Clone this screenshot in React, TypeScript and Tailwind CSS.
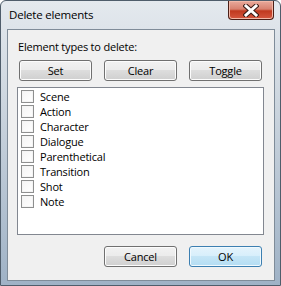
import React from "react";

const items = [
  "Scene",
  "Action",
  "Character",
  "Dialogue",
  "Parenthetical",
  "Transition",
  "Shot",
  "Note",
];

const Btn = ({ label, primary }: { label: string; primary?: boolean }) => (
  <button
    className={
      primary
        ? "h-[21px] w-[73px] rounded-[3px] border border-[#3c7fb1] bg-[linear-gradient(#e5f4fc_0%,#d6eefb_50%,#c4e5f6_50%,#b4ddf3_100%)] shadow-[inset_0_0_0_1px_#f0f9fe] text-[11px] tracking-[-0.2px] leading-[19px] text-black"
        : "h-[21px] w-[73px] rounded-[3px] border border-[#707070] bg-[linear-gradient(#f2f2f2_0%,#ebebeb_50%,#dddddd_50%,#cfcfcf_100%)] shadow-[inset_0_0_0_1px_#fcfcfc] text-[11px] tracking-[-0.2px] leading-[19px] text-black"
    }
  >
    {label}
  </button>
);

const App = () => {
  return (
    <div className="w-[281px] h-[286px] flex flex-col rounded-t-[6px] border border-[#4f5d6b] bg-[linear-gradient(180deg,#e4e9ee_0%,#cdd6df_35%,#9fb2c6_100%)] font-['Open_Sans',sans-serif]">
      {/* title bar */}
      <div className="h-[28px] flex items-start justify-between pl-[8px] pr-[6px]">
        <span className="pt-[6px] text-[11.5px] tracking-[-0.2px] leading-[15px] text-black">
          Delete elements
        </span>
        <div className="w-[46px] h-[19px] rounded-b-[4px] border border-t-0 border-[#4a1e16] bg-[linear-gradient(#e9aa9c_0%,#d8816f_45%,#c0391f_55%,#d5573f_100%)] shadow-[inset_0_0_0_1px_#f2b8a8] flex items-center justify-center">
          <svg width="16" height="13" viewBox="0 0 16 13">
            <path d="M3 2 L13 11 M13 2 L3 11" stroke="#3a1b16" strokeWidth="5" strokeLinecap="square" />
            <path d="M3 2 L13 11 M13 2 L3 11" stroke="#ffffff" strokeWidth="3" strokeLinecap="square" />
          </svg>
        </div>
      </div>

      {/* client area */}
      <div className="flex-1 ml-[6px] mr-[5px] mb-[4px] border border-[#7f8c99] bg-[#f0f0f0] flex flex-col text-[11px] tracking-[-0.2px] text-black">
        <div className="pl-[10px] pt-[9px] leading-[15px]">Element types to delete:</div>

        <div className="mt-[6px] pl-[11px] flex gap-[12px]">
          <Btn label="Set" />
          <Btn label="Clear" />
          <Btn label="Toggle" />
        </div>

        <div className="mt-[6px] ml-[9px] w-[247px] h-[148px] border border-[#828790] bg-white pl-[3px] pt-[1px] flex flex-col">
          {items.map((name) => (
            <div key={name} className="h-[15px] flex items-center gap-[6px]">
              <span className="w-[13px] h-[13px] border border-[#8e8f8f] bg-[linear-gradient(135deg,#f4f4f4,#ffffff)] shadow-[inset_0_0_0_1px_#f4f4f4]" />
              <span className="leading-[15px]">{name}</span>
            </div>
          ))}
        </div>

        <div className="mt-[11px] pl-[96px] flex gap-[12px]">
          <Btn label="Cancel" />
          <Btn label="OK" primary />
        </div>
      </div>
    </div>
  );
};

export default App;
